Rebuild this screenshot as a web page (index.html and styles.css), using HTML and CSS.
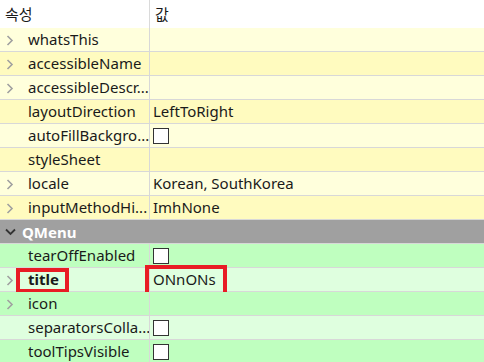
FILE: index.html
```html
<!DOCTYPE html>
<html lang="ko">
<head>
    <meta charset="UTF-8">
    <title>속성 편집기</title>
    <link rel="stylesheet" href="styles.css">
</head>
<body>
<div class="editor">
    <div class="head">
        <div class="name">속성</div>
        <div class="value">값</div>
    </div>

    <div class="row yl">
        <div class="name"><span class="arr"><svg width="8" height="11" viewBox="0 0 8 11"><polyline points="1.5,1 6,5.5 1.5,10"/></svg></span>whatsThis</div>
        <div class="value"></div>
    </div>
    <div class="row yd">
        <div class="name"><span class="arr"><svg width="8" height="11" viewBox="0 0 8 11"><polyline points="1.5,1 6,5.5 1.5,10"/></svg></span>accessibleName</div>
        <div class="value"></div>
    </div>
    <div class="row yl">
        <div class="name"><span class="arr"><svg width="8" height="11" viewBox="0 0 8 11"><polyline points="1.5,1 6,5.5 1.5,10"/></svg></span>accessibleDescr...</div>
        <div class="value"></div>
    </div>
    <div class="row yd">
        <div class="name"><span class="arr"></span>layoutDirection</div>
        <div class="value">LeftToRight</div>
    </div>
    <div class="row yl">
        <div class="name"><span class="arr"></span>autoFillBackgro...</div>
        <div class="value"><span class="check"></span></div>
    </div>
    <div class="row yd">
        <div class="name"><span class="arr"></span>styleSheet</div>
        <div class="value"></div>
    </div>
    <div class="row yl">
        <div class="name"><span class="arr"><svg width="8" height="11" viewBox="0 0 8 11"><polyline points="1.5,1 6,5.5 1.5,10"/></svg></span>locale</div>
        <div class="value">Korean, SouthKorea</div>
    </div>
    <div class="row yd">
        <div class="name"><span class="arr"><svg width="8" height="11" viewBox="0 0 8 11"><polyline points="1.5,1 6,5.5 1.5,10"/></svg></span>inputMethodHi...</div>
        <div class="value">ImhNone</div>
    </div>

    <div class="group">
        <span class="down"><svg width="11" height="8" viewBox="0 0 11 8"><polyline points="1,1.5 5.5,6 10,1.5"/></svg></span>QMenu
    </div>

    <div class="row gd">
        <div class="name"><span class="arr"></span>tearOffEnabled</div>
        <div class="value"><span class="check"></span></div>
    </div>
    <div class="row gl">
        <div class="name"><span class="arr"><svg width="8" height="11" viewBox="0 0 8 11"><polyline points="1.5,1 6,5.5 1.5,10"/></svg></span><b>title</b></div>
        <div class="value">ONnONs</div>
        <div class="mark mark-name"></div>
        <div class="mark mark-value"></div>
    </div>
    <div class="row gd">
        <div class="name"><span class="arr"><svg width="8" height="11" viewBox="0 0 8 11"><polyline points="1.5,1 6,5.5 1.5,10"/></svg></span>icon</div>
        <div class="value"></div>
    </div>
    <div class="row gl">
        <div class="name"><span class="arr"></span>separatorsColla...</div>
        <div class="value"><span class="check"></span></div>
    </div>
    <div class="row gd">
        <div class="name"><span class="arr"></span>toolTipsVisible</div>
        <div class="value"><span class="check"></span></div>
    </div>
</div>
</body>
</html>
```

FILE: styles.css
```css
* {
    margin: 0;
    padding: 0;
    box-sizing: border-box;
}

body {
    font-family: "Noto Sans", "Noto Sans CJK KR", sans-serif;
    font-size: 15px;
    color: #1a1a1a;
    background: #fff;
    width: 484px;
    height: 362px;
    overflow: hidden;
}

.editor {
    width: 484px;
}

.head {
    display: flex;
    height: 28px;
    line-height: 28px;
    background: #fff;
}

.head .name {
    width: 150px;
    padding-left: 5px;
    border-right: 1px solid #dadada;
    font-family: "Noto Sans CJK KR", sans-serif;
}

.head .value {
    padding-left: 5px;
    font-family: "Noto Sans CJK KR", sans-serif;
}

.row {
    position: relative;
    display: flex;
    height: 24px;
    line-height: 23px;
    border-bottom: 1px solid #d8d8d8;
}

.row .name {
    display: flex;
    align-items: center;
    flex-shrink: 0;
    width: 150px;
    border-right: 1px solid #d8d8d8;
    white-space: nowrap;
    overflow: hidden;
}

.row .value {
    display: flex;
    align-items: center;
    flex: 1;
    padding-left: 3px;
    white-space: nowrap;
}

.arr {
    display: flex;
    align-items: center;
    justify-content: center;
    flex-shrink: 0;
    width: 28px;
    height: 23px;
    padding-right: 8px;
    padding-top: 2px;
}

.arr polyline {
    fill: none;
    stroke: #a0a0a0;
    stroke-width: 1.6;
}

.yl { background: #ffffdc; }
.yd { background: #fffbbf; }
.gl { background: #dfffdf; }
.gd { background: #bfffbf; }

.check {
    display: block;
    width: 16px;
    height: 16px;
    border: 1px solid #333;
    background: #fff;
}

.group {
    display: flex;
    align-items: center;
    height: 24px;
    background: #a0a0a0;
    border-bottom: 1px solid #d8d8d8;
    color: #fff;
    font-weight: bold;
}

.down {
    display: flex;
    align-items: center;
    justify-content: center;
    width: 22px;
    padding-right: 2px;
}

.down polyline {
    fill: none;
    stroke: #333;
    stroke-width: 1.8;
}

.mark {
    position: absolute;
    border: 4px solid #e81c24;
}

.mark-name {
    left: 16px;
    top: 0;
    width: 53px;
    height: 25px;
}

.mark-value {
    left: 145px;
    top: -3px;
    width: 82px;
    height: 31px;
}
```
